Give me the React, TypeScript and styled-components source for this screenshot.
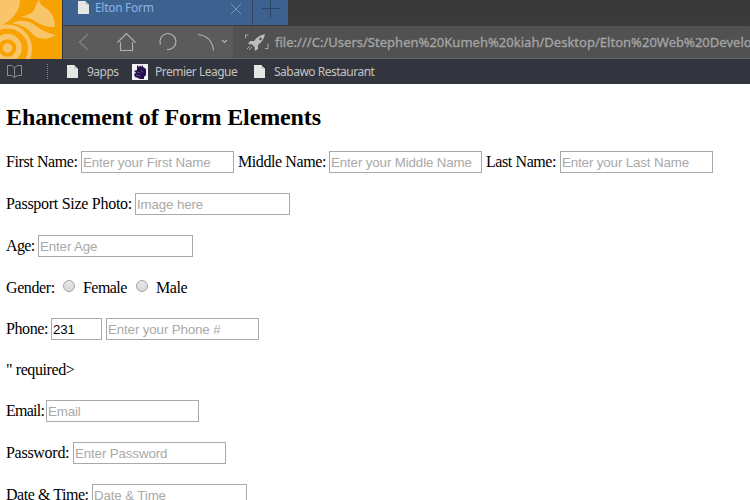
import React from 'react';
import styled, { createGlobalStyle } from 'styled-components';

const GlobalStyle = createGlobalStyle`
  * { box-sizing: border-box; }
  body { margin: 0; background: #fff; overflow: hidden; }
`;

const Window = styled.div`
  width: 750px;
  height: 500px;
  overflow: hidden;
  background: #fff;
`;

const Chrome = styled.header`
  display: flex;
  height: 59px;
  background: #3a3a3b;
`;

const Logo = styled.div`
  width: 63px;
  height: 59px;
  flex: none;
  border-right: 1px solid #30343b;
  svg { display: block; }
`;

const Bars = styled.div`
  flex: 1;
  min-width: 0;
`;

const TabStrip = styled.div`
  display: flex;
  height: 26px;
  background: linear-gradient(#373738, #3c3c3d);
`;

const Tab = styled.div`
  display: flex;
  width: 190px;
  height: 25px;
  padding: 0 9px 0 14px;
  background: #3e628f;
  border-right: 1px solid #2f435f;
  color: #8ab2e8;
  font: 12px/16px "Noto Sans", sans-serif;
  svg { flex: none; }
`;

const TabTitle = styled.span`
  flex: 1;
  margin-left: 5px;
  letter-spacing: -0.3px;
  white-space: nowrap;
`;

const NewTab = styled.div`
  width: 35px;
  height: 25px;
  background: #3e628f;
  svg { display: block; }
`;

const Toolbar = styled.div`
  display: flex;
  height: 33px;
  background: #5b5b5b;
  border-bottom: 1px solid #66676a;
`;

const NavButtons = styled.div`
  width: 170px;
  flex: none;
  svg { display: block; }
`;

const Address = styled.div`
  display: flex;
  flex: 1;
  min-width: 0;
  overflow: hidden;
  padding-left: 10px;
  background: #515151;
  svg { flex: none; }
`;

const Url = styled.span`
  margin-left: 3px;
  color: #a5a5a5;
  font: 13px/32px "Noto Sans", sans-serif;
  -webkit-text-stroke: 0.3px #a5a5a5;
  letter-spacing: 0.02px;
  white-space: nowrap;
`;

const Bookmarks = styled.nav`
  display: flex;
  align-items: center;
  height: 25px;
  padding-left: 7px;
  background: #32353d;
`;

const Divider = styled.i`
  width: 1px;
  height: 16px;
  margin: 0 18px 0 25px;
  background: repeating-linear-gradient(#85878b 0 1px, transparent 1px 2px);
`;

const Bookmark = styled.div<{ $width: number; $gap: number }>`
  display: flex;
  align-items: center;
  gap: ${p => p.$gap}px;
  width: ${p => p.$width}px;
  flex: none;
  color: #c3c3c3;
  font: 12px/24px "Noto Sans", sans-serif;
  letter-spacing: -0.5px;
  white-space: nowrap;
  svg { flex: none; }
`;

const Page = styled.main`
  padding: 20px 0 0 6px;
  color: #000;
  font: 16px/22px "Liberation Serif", serif;
`;

const Heading = styled.h2`
  height: 27px;
  margin: 0 0 20px;
  font-size: 24px;
  line-height: 27px;
  letter-spacing: -0.11px;
  white-space: nowrap;
`;

const Row = styled.div<{ $gap?: number }>`
  display: flex;
  height: 22px;
  margin-bottom: ${p => p.$gap ?? 20}px;
  letter-spacing: -0.41px;
  white-space: nowrap;
`;

const Label = styled.label<{ $width: number; $spacing?: number }>`
  flex: none;
  width: ${p => p.$width}px;
  letter-spacing: ${p => p.$spacing ?? -0.41}px;
`;

const Field = styled.input<{ $width?: number }>`
  flex: none;
  width: ${p => p.$width ?? 153}px;
  height: 22px;
  margin: 0 4px 0 0;
  padding: 1px;
  border: 1px solid #a9a9a9;
  border-radius: 0;
  background: #fff;
  color: #000;
  font: 13.333px "Liberation Sans", sans-serif;
  letter-spacing: -0.13px;
  outline: none;
  &::placeholder { color: #a9a9a9; opacity: 1; }
`;

const Radio = styled.input`
  appearance: none;
  flex: none;
  width: 12px;
  height: 12px;
  margin: 3px 8px 0 0;
  border: 1px solid #a5a5a5;
  border-radius: 50%;
  background: linear-gradient(#e8e8e8, #d8d8d8);
`;

const PageIcon = () => (
  <svg width="13" height="15" viewBox="0 0 13 15">
    <path d="M1 1h7l4 4v9H1z" fill="#e6e6e4" />
    <path d="M8 1v4h4" fill="#bfc0c1" stroke="#f4f4f4" strokeWidth=".6" />
  </svg>
);

const SquirrelLogo = () => (
  <svg width="62" height="59" viewBox="0 0 62 59">
    <path fill="#f7a200" d="M0 0h62v59H0z" />
    <g fill="#f8c56b">
      <path d="M0 0h20c0 7-3 13-8 18-4 4-8 6-12 8z" />
      <path d="M39 0c1 3 2 5 5 7 7 4 11 10 11 20-9 0-14-2-20-6-5-3-9-4-15-4 7-2 12-3 14-7 2-3 2-7 5-10z" />
      <path d="M12 23c7-3 15-3 21 1 7 5 13 9 23 11-5 3-11 5-17 3-7-2-9-9-17-12-3-1-6-2-10-3z" />
    </g>
    <circle cx="7.500" cy="49" r="22.500" fill="none" stroke="#f8c56b" strokeWidth="4" />
    <circle cx="7.500" cy="48" r="11.500" fill="none" stroke="#f8c56b" strokeWidth="5.500" />
    <circle cx="7.500" cy="48" r="4.800" fill="#f8c56b" />
  </svg>
);

const NavIcons = () => (
  <svg width="170" height="32" viewBox="63 26 170 32" fill="none" stroke="#b2b2b2" strokeWidth="1.15">
    <path d="M88 34l-8.5 8 8.5 8" stroke="#858585" />
    <path d="M117.5 42.5l9-9 9 9M120.5 42v8.500h12V42" />
    <path d="M160.500 44.500A8 8 0 1 1 167 49.500" />
    <path d="M198 34.500c9 1 14.500 7 15.500 16" />
    <path d="M222 40l2.500 2.500 2.500-2.500" />
  </svg>
);

const Rocket = () => (
  <svg width="29" height="32" viewBox="243 26 29 32">
    <path d="M245.500 38v-3h3M265 48.500h3v-5" fill="none" stroke="#aaa" />
    <path d="M265 34c-5 1-8 3-11 7h-4l-2 3 4 .5 2.500 2.500.5 4 3-2v-4c4-3 6-6 7-11z" fill="#bbb" />
    <path d="M250 46l-3 3m5-2l-3 3" stroke="#aaa" />
    <circle cx="260.500" cy="39" r="1.300" fill="#515151" />
  </svg>
);

const BookIcon = () => (
  <svg width="15" height="15" viewBox="0 0 15 15" fill="none" stroke="#8b8d91">
    <path d="M.5 1.500h4l3 2 3-2h4v10h-4l-3 2-3-2h-4zM7.500 3.500v10" />
  </svg>
);

const LionIcon = () => (
  <svg width="16" height="16" viewBox="0 0 16 16">
    <path fill="#f4f0f8" d="M0 0h16v16H0z" />
    <path fill="#28104d" d="M5 4V1l2 2 1-2 1 2 2-2v2l3 2v6l-2 2v2H8l-2-1-3-1-1-3 2-1-2-2 3-1z" />
    <path d="M5 8l3 1M9 7l2 1M4 11l4 1" fill="none" stroke="#7459a0" strokeWidth=".8" />
  </svg>
);

type SingleField = { label: string; hint: string; at: number; size?: number; gap?: number; spacing?: number };

const FieldRow = ({ label, hint, at, size, gap, spacing }: SingleField) => (
  <Row $gap={gap}>
    <Label $width={at} $spacing={spacing}>{label}</Label>
    <Field $width={size} placeholder={hint} aria-label={label} />
  </Row>
);

export default function App() {
  return (
    <Window>
      <GlobalStyle />
      <Chrome>
        <Logo><SquirrelLogo /></Logo>
        <Bars>
          <TabStrip>
            <Tab>
              <PageIcon />
              <TabTitle>Elton Form</TabTitle>
              <svg width="13" height="17" viewBox="0 0 13 17"><path d="M1 4l10 10M11 4L1 14" stroke="#7896bd" /></svg>
            </Tab>
            <NewTab>
              <svg width="35" height="25"><path d="M9 8.500h18M17.500 0v18" stroke="#2b4564" /></svg>
            </NewTab>
          </TabStrip>
          <Toolbar>
            <NavButtons><NavIcons /></NavButtons>
            <Address>
              <Rocket />
              <Url>file:///C:/Users/Stephen%20Kumeh%20kiah/Desktop/Elton%20Web%20Development</Url>
            </Address>
          </Toolbar>
        </Bars>
      </Chrome>
      <Bookmarks>
        <BookIcon />
        <Divider />
        <Bookmark $width={66} $gap={8}><PageIcon />9apps</Bookmark>
        <Bookmark $width={121} $gap={7}><LionIcon />Premier League</Bookmark>
        <Bookmark $width={150} $gap={8}><PageIcon />Sabawo Restaurant</Bookmark>
      </Bookmarks>
      <Page>
        <Heading>Ehancement of Form Elements</Heading>
        <Row>
          <Label $width={75}>First Name:</Label>
          <Field placeholder="Enter your First Name" />
          <Label $width={91}>Middle Name:</Label>
          <Field placeholder="Enter your Middle Name" />
          <Label $width={74}>Last Name:</Label>
          <Field placeholder="Enter your Last Name" />
        </Row>
        <FieldRow label="Passport Size Photo:" hint="Image here" at={129} size={155} spacing={-0.28} />
        <FieldRow label="Age:" hint="Enter Age" at={32} size={155} spacing={-0.6} />
        <Row $gap={19}>
          <Label $width={57}>Gender:</Label>
          <Radio type="radio" name="gender" />
          <Label $width={53} $spacing={-0.55}>Female</Label>
          <Radio type="radio" name="gender" />
          <Label $width={40}>Male</Label>
        </Row>
        <Row $gap={19}>
          <Label $width={45}>Phone:</Label>
          <Field $width={51} defaultValue="231" />
          <Field placeholder="Enter your Phone #" />
        </Row>
        <Row $gap={19}>" required&gt;</Row>
        <FieldRow label="Email:" hint="Email" at={40} spacing={-0.75} />
        <FieldRow label="Password:" hint="Enter Password" at={67} spacing={-0.28} />
        <FieldRow label="Date & Time:" hint="Date & Time" at={86} size={155} spacing={-0.45} />
      </Page>
    </Window>
  );
}
